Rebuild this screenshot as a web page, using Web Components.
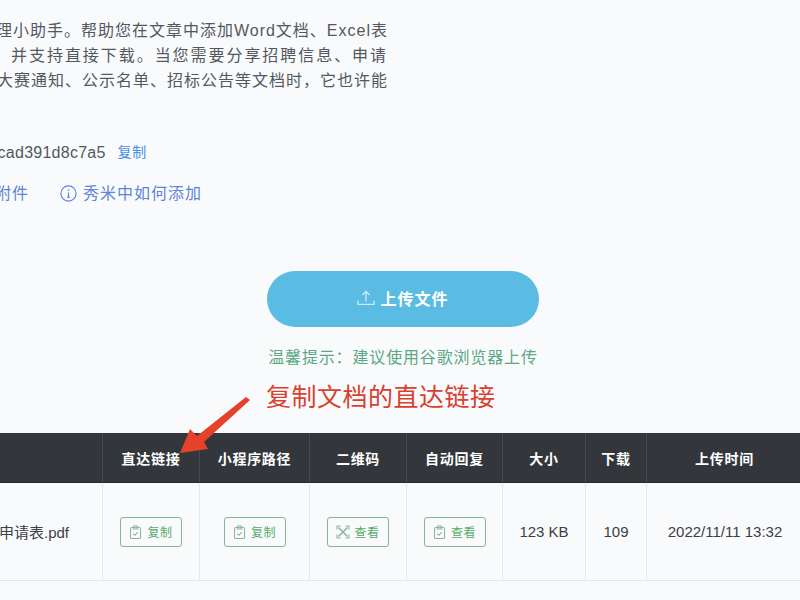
<!DOCTYPE html>
<html>
<head>
<meta charset="utf-8">
<style>
	html, body { margin: 0; background: #f9fafc; }
	body { width: 800px; height: 600px; overflow: hidden; font-family: "Liberation Sans", "Noto Sans CJK SC", sans-serif; }
</style>
</head>
<body>
<doc-page>
	<doc-intro>
		<span slot="line">理小助手。帮助您在文章中添加Word文档、Excel表</span>
		<span slot="line" style="letter-spacing: 1.95px">并支持直接下载。当您需要分享招聘信息、申请</span>
		<span slot="line">大赛通知、公示名单、招标公告等文档时，它也许能</span>
	</doc-intro>
	<upload-box></upload-box>
	<file-table></file-table>
	<arrow-note>复制文档的直达链接</arrow-note>
</doc-page>

<script>
class DocPage extends HTMLElement {
	constructor() {
		super();
		this.attachShadow({ mode: "open" });
		this.shadowRoot.innerHTML = `
			<style>
				:host {
					display: flex;
					flex-direction: column;
					position: relative;
					width: 800px;
					height: 600px;
					overflow: hidden;
				}
			</style>
			<slot></slot>
		`;
	}
}

class DocIntro extends HTMLElement {
	constructor() {
		super();
		this.attachShadow({ mode: "open" });
		this.shadowRoot.innerHTML = `
			<style>
				:host {
					display: block;
					width: 388px;
					padding-top: 18px;
					overflow: hidden;
					font-size: 16px;
					line-height: 25px;
					letter-spacing: 1px;
					color: #53585e;
				}
				#lines {
					display: flex;
					flex-direction: column;
					align-items: flex-end;
					white-space: nowrap;
				}
				::slotted(span) { display: block; }
				#hash {
					display: flex;
					gap: 12px;
					margin-top: 47px;
					width: 147px;
					justify-content: flex-end;
					white-space: nowrap;
					letter-spacing: .25px;
				}
				#copy { color: #4a8fdc; font-size: 14px; letter-spacing: .7px; }
				#links {
					display: flex;
					align-items: center;
					margin-top: 16px;
					margin-left: -5px;
					color: #5f84d6;
					white-space: nowrap;
				}
				#links svg { margin: 0 6px 0 31px; }
			</style>
			<div id="lines"><slot name="line"></slot></div>
			<div id="hash"><span>cad391d8c7a5</span><span id="copy">复制</span></div>
			<div id="links">
				<span>附件</span>
				<svg width="17" height="17" viewBox="0 0 17 17" fill="none" stroke="#5f84d6">
					<circle cx="8.5" cy="8.5" r="7.6" stroke-width="1.1"/>
					<path d="M8.5 7.4V12.4M7.3 12.4H9.7" stroke-width="1.2"/>
					<path d="M8.5 4.4V5.8" stroke-width="1.4"/>
				</svg>
				<span>秀米中如何添加</span>
			</div>
		`;
	}
}

class UploadBox extends HTMLElement {
	constructor() {
		super();
		this.attachShadow({ mode: "open" });
		this.shadowRoot.innerHTML = `
			<style>
				:host {
					display: flex;
					flex-direction: column;
					align-items: center;
					gap: 18px;
					width: 806px;
					margin-top: 65px;
				}
				button {
					display: flex;
					align-items: center;
					justify-content: center;
					gap: 5px;
					box-sizing: border-box;
					width: 272px;
					height: 56px;
					padding: 0 0 2px;
					border: 0;
					border-radius: 28px;
					background: #5bbce3;
					color: #fff;
					font: bold 16px "Liberation Sans", "Noto Sans CJK SC", sans-serif;
					letter-spacing: 1px;
				}
				p {
					margin: 1px 0 0;
					font-size: 16px;
					line-height: 24px;
					letter-spacing: .85px;
					color: #5ba883;
				}
			</style>
			<button>
				<svg width="18" height="16" viewBox="0 0 18 16" fill="none" stroke="#cfeaf6" stroke-width="1.3">
					<path d="M1 10.5V14.4H17V10.5"/>
					<path d="M9 11.5V1.5M5.4 5 9 1.5 12.6 5"/>
				</svg>
				<span>上传文件</span>
			</button>
			<p>温馨提示：建议使用谷歌浏览器上传</p>
		`;
	}
}

class ActionButton extends HTMLElement {
	constructor() {
		super();
		this.attachShadow({ mode: "open" });
		const icons = {
			clip: `<rect x="1.5" y="2.5" width="10" height="11" rx="1.2"/><path d="M4.5 1h4v3h-4z"/><path d="M4.4 8.6 6 10.2 8.8 7.2"/>`,
			scan: `<path d="M2.5 2.5 11.5 11.5M11.5 2.5 2.5 11.5" stroke-width="1.6"/><path d="M1 4.5V1H4.5M9.5 1H13V4.5M13 9.5V13H9.5M4.5 13H1V9.5" stroke-width="1.1"/>`,
		};
		this.shadowRoot.innerHTML = `
			<style>
				:host {
					display: inline-flex;
					align-items: center;
					justify-content: center;
					gap: 4px;
					box-sizing: border-box;
					width: 62px;
					height: 30px;
					border: 1px solid #86b595;
					border-radius: 3px;
					font-size: 12px;
					letter-spacing: .5px;
					color: #56ab68;
				}
				svg { flex: none; }
			</style>
			<svg width="14" height="14" viewBox="0 0 14 14" fill="none" stroke="#8fb79c" stroke-width="1.1">${icons[this.getAttribute("icon")]}</svg>
			<slot></slot>
		`;
	}
}

class FileTable extends HTMLElement {
	constructor() {
		super();
		this.attachShadow({ mode: "open" });
		const heads = ["", "直达链接", "小程序路径", "二维码", "自动回复", "大小", "下载", "上传时间"];
		this.shadowRoot.innerHTML = `
			<style>
				:host {
					display: grid;
					grid-template-columns: 103px 97px 110px 97px 96px 83px 61px 156px;
					grid-template-rows: 50px 98px;
					margin-top: 63px;
					font-size: 15px;
				}
				.head {
					display: flex;
					align-items: center;
					justify-content: center;
					box-sizing: border-box;
					background: #33373b;
					border-right: 1px solid #464a4e;
					border-bottom: 1px solid #26292c;
					color: #fff;
					font-size: 14px;
					font-weight: bold;
					letter-spacing: .7px;
				}
				.head:last-of-type { border-right: 0; }
				.cell {
					display: flex;
					align-items: center;
					justify-content: center;
					box-sizing: border-box;
					border-right: 1px solid #e5e7ea;
					border-bottom: 1px solid #e2e4e8;
					color: #3c3f44;
				}
				.cell.last { border-right: 0; }
				.name { justify-content: flex-end; padding-right: 33px; white-space: nowrap; }
			</style>
			${heads.map((h) => `<div class="head">${h}</div>`).join("")}
			<div class="cell name">申请表.pdf</div>
			<div class="cell"><action-button icon="clip">复制</action-button></div>
			<div class="cell"><action-button icon="clip">复制</action-button></div>
			<div class="cell"><action-button icon="scan">查看</action-button></div>
			<div class="cell"><action-button icon="clip">查看</action-button></div>
			<div class="cell">123 KB</div>
			<div class="cell">109</div>
			<div class="cell last">2022/11/11 13:32</div>
		`;
	}
}

//The annotation is drawn over the page, like the hand-made mark-up in the screenshot.
class ArrowNote extends HTMLElement {
	constructor() {
		super();
		this.attachShadow({ mode: "open" });
		this.shadowRoot.innerHTML = `
			<style>
				:host {
					position: absolute;
					left: 0;
					top: 0;
					width: 800px;
					height: 600px;
					pointer-events: none;
				}
				span {
					position: absolute;
					left: 266px;
					top: 381px;
					font-size: 25px;
					line-height: 32px;
					letter-spacing: .5px;
					white-space: nowrap;
					color: #d8402f;
				}
				svg { position: absolute; left: 0; top: 0; }
			</style>
			<span><slot></slot></span>
			<svg width="800" height="600" viewBox="0 0 800 600">
				<polygon points="180,453 190,429 197,436 246,397 250,400 204,442 208,449" fill="#e6412b"/>
			</svg>
		`;
	}
}

customElements.define("doc-page", DocPage);
customElements.define("doc-intro", DocIntro);
customElements.define("upload-box", UploadBox);
customElements.define("action-button", ActionButton);
customElements.define("file-table", FileTable);
customElements.define("arrow-note", ArrowNote);
</script>
</body>
</html>
